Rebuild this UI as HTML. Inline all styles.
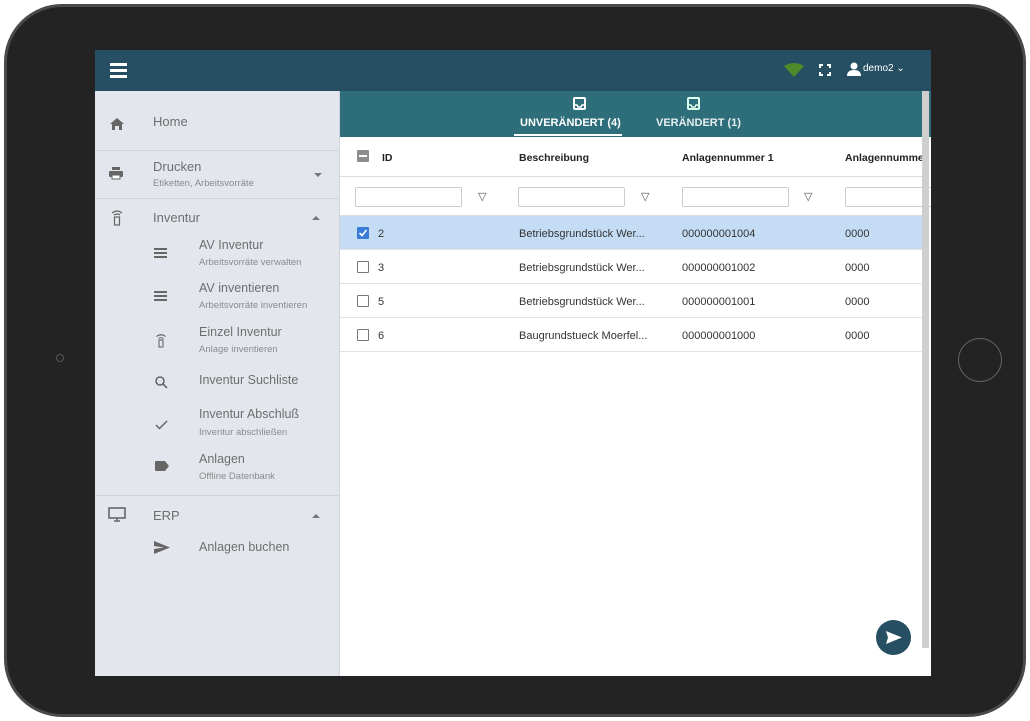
<!DOCTYPE html>
<html><head><meta charset="utf-8"><style>
*{box-sizing:border-box;margin:0;padding:0}
body{width:1030px;height:721px;background:#fff;position:relative;overflow:hidden;font-family:"Liberation Sans",sans-serif}
.frame{position:absolute;left:4px;top:4px;width:1022px;height:713px;background:#232323;border-radius:58px;border:3px solid #4a4a4a}
.home{position:absolute;left:958px;top:338px;width:44px;height:44px;border-radius:50%;border:1.5px solid #666}
.cam{position:absolute;left:56px;top:354px;width:8px;height:8px;border-radius:50%;border:1px solid #555}
.screen{position:absolute;left:95px;top:50px;width:836px;height:626px;background:#fff;overflow:hidden}
.top{position:absolute;left:0;top:0;width:836px;height:41px;background:#274f63}
.side{position:absolute;left:0;top:41px;width:245px;height:585px;background:#e3e7ed;border-right:1px solid #cfd4da}
.tabs{position:absolute;left:245px;top:41px;width:591px;height:46px;background:#2e6e7b}
.t{position:absolute;color:#fff;font-weight:bold;font-size:11px}
.ico{position:absolute;color:#6b6b6b}
.lbl{position:absolute;color:#6e6e6e;font-size:13px}
.sub{position:absolute;color:#8a8a8a;font-size:9.5px}
.sep{position:absolute;left:0;width:245px;height:1px;background:#cfd4da}
.row{position:absolute;left:245px;width:582px;height:34px;border-bottom:1px solid #e2e2e2;font-size:11px;color:#333}
.row span{position:absolute;top:12px}
.cb{position:absolute;left:17px;top:11px;width:12px;height:12px;border:1.5px solid #777;border-radius:1px;background:#fff}
.inp{position:absolute;top:137px;width:107px;height:20px;border:1px solid #ccc;border-radius:2px;background:#fff}
.fl{position:absolute;top:140px;font-size:11px;color:#555}
</style></head><body>
<div class="frame"></div>
<div class="cam"></div>
<div class="home"></div>
<div class="screen">
 <div class="top">
  <div style="position:absolute;left:15px;top:13px;width:17px;height:3px;background:#fff;box-shadow:0 6px 0 #fff,0 12px 0 #fff"></div>
  <svg style="position:absolute;left:689px;top:13px" width="20" height="14"><path d="M0 3 Q10 -3 20 3 L10 14Z" fill="#4f8a2a"/></svg>
  <svg style="position:absolute;left:724px;top:14px" width="12" height="12" fill="none" stroke="#fff" stroke-width="2"><path d="M1 4V1H4M8 1H11V4M11 8V11H8M4 11H1V8"/></svg>
  <svg style="position:absolute;left:752px;top:12px" width="14" height="15" fill="#fff"><circle cx="7" cy="4" r="3.5"/><path d="M0 14Q0 8 7 8Q14 8 14 14Z"/></svg>
  <div style="position:absolute;left:768px;top:13px;color:#fff;font-size:10px">demo2 ⌄</div>
 </div>
 <div class="side">
  <svg class="ico" style="left:15px;top:27px" width="14" height="12" fill="#666"><path d="M7 0L14 6H12V12H9V8H5V12H2V6H0Z"/></svg>
  <div class="lbl" style="left:58px;top:23px">Home</div>
  <div class="sep" style="top:59px"></div>
  <svg style="position:absolute;left:14px;top:76px" width="14" height="13" fill="#666"><rect x="3" y="0" width="8" height="3"/><rect x="0" y="4" width="14" height="6" rx="1"/><rect x="3" y="8" width="8" height="4" fill="#fff" stroke="#666"/></svg>
  <div class="lbl" style="left:58px;top:68px">Drucken</div>
  <div class="sub" style="left:58px;top:87px">Etiketten, Arbeitsvorräte</div>
  <div style="position:absolute;left:219px;top:82px;border:4px solid transparent;border-top-color:#777"></div>
  <div class="sep" style="top:107px"></div>
  <svg style="position:absolute;left:16px;top:118px" width="12" height="17" fill="none" stroke="#666" stroke-width="1.2"><path d="M1 4Q6 0 11 4M3 6Q6 4 9 6"/><rect x="3.5" y="8" width="5" height="8"/></svg>
  <div class="lbl" style="left:58px;top:119px">Inventur</div>
  <div style="position:absolute;left:217px;top:121px;border:4px solid transparent;border-bottom-color:#777"></div>
  <div style="position:absolute;left:59px;top:157px;width:13px;height:2px;background:#666;box-shadow:0 4px 0 #666,0 8px 0 #666"></div>
  <div class="lbl" style="left:104px;top:147px;font-size:12.5px">AV Inventur</div>
  <div class="sub" style="left:104px;top:166px">Arbeitsvorräte verwalten</div>
  <div style="position:absolute;left:59px;top:200px;width:13px;height:2px;background:#666;box-shadow:0 4px 0 #666,0 8px 0 #666"></div>
  <div class="lbl" style="left:104px;top:190px;font-size:12.5px">AV inventieren</div>
  <div class="sub" style="left:104px;top:209px">Arbeitsvorräte inventieren</div>
  <svg style="position:absolute;left:61px;top:242px" width="10" height="15" fill="none" stroke="#666" stroke-width="1.1"><path d="M0.5 3.5Q5 0 9.5 3.5M2.5 5.5Q5 4 7.5 5.5"/><rect x="3" y="7" width="4" height="7"/></svg>
  <div class="lbl" style="left:104px;top:234px;font-size:12.5px">Einzel Inventur</div>
  <div class="sub" style="left:104px;top:253px">Anlage inventieren</div>
  <svg style="position:absolute;left:60px;top:285px" width="13" height="13" fill="none" stroke="#666" stroke-width="1.6"><circle cx="5" cy="5" r="4"/><path d="M8 8L12 12"/></svg>
  <div class="lbl" style="left:104px;top:282px;font-size:12.5px">Inventur Suchliste</div>
  <svg style="position:absolute;left:60px;top:329px" width="13" height="10" fill="none" stroke="#666" stroke-width="1.5"><path d="M1 5L4.5 8.5L12 1"/></svg>
  <div class="lbl" style="left:104px;top:316px;font-size:12.5px">Inventur Abschluß</div>
  <div class="sub" style="left:104px;top:336px">Inventur abschließen</div>
  <svg style="position:absolute;left:60px;top:370px" width="14" height="10" fill="#666"><path d="M0 1Q0 0 1 0H10L14 5L10 10H1Q0 10 0 9Z"/></svg>
  <div class="lbl" style="left:104px;top:361px;font-size:12.5px">Anlagen</div>
  <div class="sub" style="left:104px;top:380px">Offline Datenbank</div>
  <div class="sep" style="top:404px"></div>
  <svg style="position:absolute;left:13px;top:416px" width="18" height="16" fill="none" stroke="#666" stroke-width="1.6"><rect x="1" y="1" width="16" height="10"/><path d="M6 14H12M9 11V14"/></svg>
  <div class="lbl" style="left:58px;top:417px">ERP</div>
  <div style="position:absolute;left:217px;top:419px;border:4px solid transparent;border-bottom-color:#777"></div>
  <svg style="position:absolute;left:59px;top:450px" width="16" height="13" fill="#666"><path d="M0 0L16 6.5L0 13L0 8L10 6.5L0 5Z"/></svg>
  <div class="lbl" style="left:104px;top:449px;font-size:12.5px">Anlagen buchen</div>
 </div>
 <div class="tabs">
  <svg style="position:absolute;left:233px;top:6px" width="13" height="13" fill="none" stroke="#fff" stroke-width="2"><rect x="1" y="1" width="11" height="11" rx="1"/><path d="M1 8H4L5 10H8L9 8H12" stroke-width="1.5"/></svg>
  <div class="t" style="left:180px;top:26px">UNVERÄNDERT (4)</div>
  <div style="position:absolute;left:174px;top:43px;width:108px;height:2px;background:#fff"></div>
  <svg style="position:absolute;left:347px;top:6px" width="13" height="13" fill="none" stroke="#dfe" stroke-width="2"><rect x="1" y="1" width="11" height="11" rx="1"/><path d="M1 8H4L5 10H8L9 8H12" stroke-width="1.5"/></svg>
  <div class="t" style="left:316px;top:26px;color:#e4eef0">VERÄNDERT (1)</div>
 </div>
 <div style="position:absolute;left:245px;top:87px;width:582px;height:40px;border-bottom:1px solid #ddd;font-size:10.5px;font-weight:bold;color:#222">
  <div style="position:absolute;left:17px;top:13px;width:12px;height:12px;background:#8d8d8d;border-radius:1px"><div style="margin:5px 2px;height:2px;background:#fff"></div></div>
  <span style="position:absolute;left:42px;top:15px">ID</span>
  <span style="position:absolute;left:179px;top:15px">Beschreibung</span>
  <span style="position:absolute;left:342px;top:15px">Anlagennummer 1</span>
  <span style="position:absolute;left:505px;top:15px">Anlagennummer</span>
 </div>
 <div class="inp" style="left:260px"></div><div class="fl" style="left:383px">▽</div>
 <div class="inp" style="left:423px"></div><div class="fl" style="left:546px">▽</div>
 <div class="inp" style="left:587px"></div><div class="fl" style="left:709px">▽</div>
 <div class="inp" style="left:750px;width:90px"></div>
 <div style="position:absolute;left:245px;top:165px;width:582px;height:1px;background:#ddd"></div>
 <div class="row" style="top:166px;background:#c5dcf5">
  <div class="cb" style="background:#3a7bd5;border-color:#3a7bd5"><svg width="10" height="10" style="position:absolute;left:0;top:0" fill="none" stroke="#fff" stroke-width="1.6"><path d="M1.5 5L4 7.5L8.5 2"/></svg></div>
  <span style="left:38px">2</span><span style="left:179px">Betriebsgrundstück Wer...</span><span style="left:342px">000000001004</span><span style="left:505px">0000</span></div>
 <div class="row" style="top:200px"><div class="cb"></div><span style="left:38px">3</span><span style="left:179px">Betriebsgrundstück Wer...</span><span style="left:342px">000000001002</span><span style="left:505px">0000</span></div>
 <div class="row" style="top:234px"><div class="cb"></div><span style="left:38px">5</span><span style="left:179px">Betriebsgrundstück Wer...</span><span style="left:342px">000000001001</span><span style="left:505px">0000</span></div>
 <div class="row" style="top:268px"><div class="cb"></div><span style="left:38px">6</span><span style="left:179px">Baugrundstueck Moerfel...</span><span style="left:342px">000000001000</span><span style="left:505px">0000</span></div>
 <div style="position:absolute;left:827px;top:41px;width:7px;height:557px;background:#cfcfcf"></div>
 <div style="position:absolute;left:781px;top:570px;width:35px;height:35px;border-radius:50%;background:#274f63"><svg width="35" height="35" fill="#fff"><path d="M10 11L26 17.5L10 24L12 17.5Z"/></svg></div>
</div>
</body></html>
